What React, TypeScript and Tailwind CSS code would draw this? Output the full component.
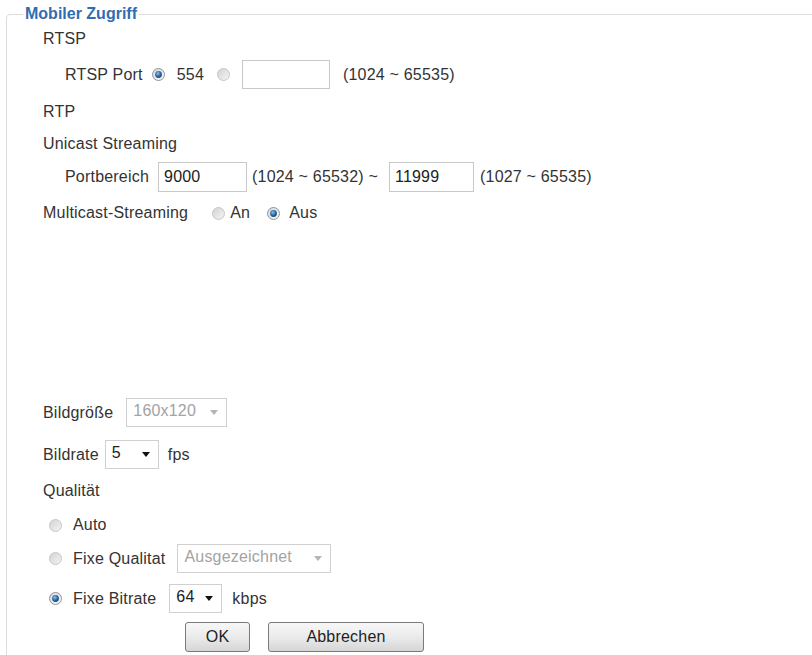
import { useId } from "react";

interface RadioProps {
  checked?: boolean;
  className?: string;
}

// Small round option button with a soft grey body and a blue dot when on
const Radio: React.FC<RadioProps> = ({ checked = false, className = "" }) => {
  const id = useId().replace(/:/g, "");
  return (
    <svg width="13" height="13" viewBox="0 0 13 13" className={`shrink-0 ${className}`}>
      <defs>
        <linearGradient id={`body${id}`} x1="0" y1="0" x2="1" y2="1">
          <stop offset="0" stopColor={checked ? "#d6d6d6" : "#d2d2d2"} />
          <stop offset="1" stopColor={checked ? "#fbfbfb" : "#f5f5f5"} />
        </linearGradient>
        <radialGradient id={`dot${id}`} cx="0.4" cy="0.35" r="0.7">
          <stop offset="0" stopColor="#8cc2ef" />
          <stop offset="0.55" stopColor="#2d6ea8" />
          <stop offset="1" stopColor="#173f66" />
        </radialGradient>
      </defs>
      <circle
        cx="6.5"
        cy="6.5"
        r="6"
        fill={`url(#body${id})`}
        stroke={checked ? "#8f9499" : "#c6c6c6"}
        strokeWidth="1"
      />
      {checked && <circle cx="6.5" cy="6.5" r="3.4" fill={`url(#dot${id})`} />}
    </svg>
  );
};

interface FieldProps {
  value?: string;
  width: string;
  height?: string;
  className?: string;
}

const TextField: React.FC<FieldProps> = ({ value = "", width, height = "h-[29px]", className = "" }) => (
  <div
    className={`${width} ${height} ${className} shrink-0 border border-[#c9c9c9] bg-white pl-[5px] flex items-start pt-[2px] text-[#222]`}
  >
    {value}
  </div>
);

interface SelectProps {
  value: string;
  width: string;
  disabled?: boolean;
  className?: string;
}

const SelectBox: React.FC<SelectProps> = ({ value, width, disabled = false, className = "" }) => (
  <div
    className={`${width} ${className} h-[29px] shrink-0 border border-[#d0d0d0] bg-white flex items-center justify-between pl-[6px] pr-[8px] ${
      disabled ? "text-[#a3a3a3]" : "text-[#222]"
    }`}
  >
    <span className="-mt-[3px]">{value}</span>
    <svg width="8" height="5" viewBox="0 0 8 5">
      <path d="M0 0h8L4 5z" fill={disabled ? "#b5b5b5" : "#111"} />
    </svg>
  </div>
);

const Button: React.FC<{ label: string; width: string; className?: string }> = ({ label, width, className = "" }) => (
  <button
    className={`${width} ${className} h-[30px] shrink-0 rounded-[3px] border border-[#7a7a7a] bg-gradient-to-b from-[#f7f7f7] via-[#ebebeb] to-[#d6d6d6] text-[16px] text-[#1e1e1e] leading-none`}
  >
    {label}
  </button>
);

export default function App() {
  return (
    <div className="w-[812px] h-[655px] overflow-hidden bg-white font-['Liberation_Sans',Arial,sans-serif] text-[16px] tracking-[0.2px] text-[#333]">
      <fieldset className="ml-[6px] w-[830px] min-h-[720px] border border-[#dedede] rounded-tl-[4px] pl-[16px]">
        <legend className="px-[2px] text-[16px] font-bold leading-[28px] tracking-normal text-[#2f6db3]">
          Mobiler Zugriff
        </legend>

        {/* RTSP */}
        <div className="pl-[20px] h-[22px] flex items-center">RTSP</div>
        <div className="pl-[42px] mt-[10px] h-[29px] flex items-center">
          <span>RTSP Port</span>
          <Radio checked className="ml-[9px]" />
          <span className="ml-[12px]">554</span>
          <Radio className="ml-[13px]" />
          <TextField width="w-[88px]" className="ml-[12px]" />
          <span className="ml-[13px]">(1024 ~ 65535)</span>
        </div>

        {/* RTP */}
        <div className="pl-[20px] mt-[12px] h-[22px] flex items-center">RTP</div>
        <div className="pl-[20px] mt-[10px] h-[22px] flex items-center">Unicast Streaming</div>
        <div className="pl-[42px] mt-[7px] h-[30px] flex items-center">
          <span>Portbereich</span>
          <TextField value="9000" width="w-[89px]" height="h-[30px]" className="ml-[9px]" />
          <span className="ml-[5px]">(1024 ~ 65532) ~</span>
          <TextField value="11999" width="w-[85px]" height="h-[30px]" className="ml-[11px]" />
          <span className="ml-[6px]">(1027 ~ 65535)</span>
        </div>
        <div className="pl-[20px] mt-[10px] h-[22px] flex items-center">
          <span>Multicast-Streaming</span>
          <Radio className="ml-[24px]" />
          <span className="ml-[5px]">An</span>
          <Radio checked className="ml-[17px]" />
          <span className="ml-[9px]">Aus</span>
        </div>

        {/* Video */}
        <div className="pl-[20px] mt-[174px] h-[29px] flex items-center">
          <span>Bildgröße</span>
          <SelectBox value="160x120" width="w-[101px]" disabled className="ml-[13px]" />
        </div>
        <div className="pl-[20px] mt-[13px] h-[29px] flex items-center">
          <span>Bildrate</span>
          <SelectBox value="5" width="w-[54px]" className="ml-[6px]" />
          <span className="ml-[9px]">fps</span>
        </div>
        <div className="pl-[20px] mt-[11px] h-[22px] flex items-center">Qualität</div>
        <div className="pl-[26px] mt-[12px] h-[22px] flex items-center">
          <Radio />
          <span className="ml-[11px]">Auto</span>
        </div>
        <div className="pl-[26px] mt-[8px] h-[29px] flex items-center">
          <Radio />
          <span className="ml-[11px]">Fixe Qualitat</span>
          <SelectBox value="Ausgezeichnet" width="w-[154px]" disabled className="ml-[12px]" />
        </div>
        <div className="pl-[26px] mt-[11px] h-[29px] flex items-center">
          <Radio checked />
          <span className="ml-[11px]">Fixe Bitrate</span>
          <SelectBox value="64" width="w-[53px]" className="ml-[13px]" />
          <span className="ml-[10px]">kbps</span>
        </div>

        <div className="pl-[162px] mt-[9px] flex items-center">
          <Button label="OK" width="w-[65px]" />
          <Button label="Abbrechen" width="w-[156px]" className="ml-[18px]" />
        </div>
      </fieldset>
    </div>
  );
}
